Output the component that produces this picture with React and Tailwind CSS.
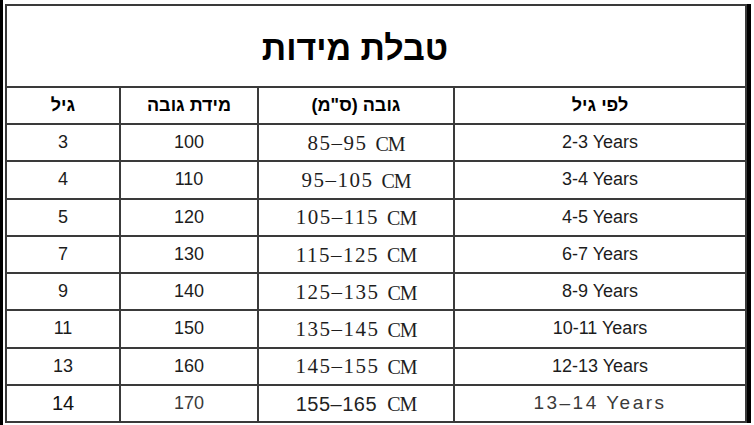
import React from 'react';

const rows = [
    { age: '3', size: '100', height: '85–95', years: '2-3 Years' },
    { age: '4', size: '110', height: '95–105', years: '3-4 Years' },
    { age: '5', size: '120', height: '105–115', years: '4-5 Years' },
    { age: '7', size: '130', height: '115–125', years: '6-7 Years' },
    { age: '9', size: '140', height: '125–135', years: '8-9 Years' },
    { age: '11', size: '150', height: '135–145', years: '10-11 Years' },
    { age: '13', size: '160', height: '145–155', years: '12-13 Years' },
];

const Row = ({ children }) => (
    <div className="flex h-[37.25px] border-t-2 border-[#3a3a3a]">
        {children}
    </div>
);

const App = () => {
    return (
        <div className="w-[754px] h-[425px] bg-white overflow-hidden flex font-['Liberation_Sans',Arial,sans-serif]">
            <div className="w-[3px] h-full bg-black" />
            <div className="w-[2px]" />
            <div className="flex flex-col mt-[4px] w-[742px] h-[419px] border-2 border-[#3a3a3a]">
                <div className="h-[80px] flex items-center justify-center pr-[42px] pt-[4px]">
                    <h1 dir="rtl" className="text-[34px] font-bold text-black">טבלת מידות</h1>
                </div>

                <div className="flex h-[37px] border-t-2 border-[#3a3a3a] text-[18px] font-bold text-black">
                    <div className="w-[112px] flex items-center justify-center" dir="rtl">גיל</div>
                    <div className="w-[138px] border-l-2 border-[#3a3a3a] flex items-center justify-center" dir="rtl">מידת גובה</div>
                    <div className="w-[196px] border-l-2 border-[#3a3a3a] flex items-center justify-center" dir="rtl">גובה (ס"מ)</div>
                    <div className="flex-1 border-l-2 border-[#3a3a3a] flex items-center justify-center" dir="rtl">לפי גיל</div>
                </div>

                {rows.map((r) => (
                    <Row key={r.age}>
                        <div className="w-[112px] flex items-center justify-center text-[18px] text-[#1c1c1c]">{r.age}</div>
                        <div className="w-[138px] border-l-2 border-[#3a3a3a] flex items-center justify-center text-[18px] text-[#1c1c1c]">{r.size}</div>
                        <div className="w-[196px] border-l-2 border-[#3a3a3a] flex items-center justify-center font-['Liberation_Serif',serif] text-[21px] text-[#1e1e1e] pt-[2px]">
                            <span className="tracking-[1.5px]">{r.height}</span>
                            <span className="ml-[8px] text-[20px] tracking-[-1px]">CM</span>
                        </div>
                        <div className="flex-1 border-l-2 border-[#3a3a3a] flex items-center justify-center text-[18px] text-[#1c1c1c]">{r.years}</div>
                    </Row>
                ))}

                <div className="flex flex-1 border-t-2 border-[#3a3a3a]">
                    <div className="w-[112px] flex items-center justify-center text-[20px] text-[#111]">14</div>
                    <div className="w-[138px] border-l-2 border-[#3a3a3a] flex items-center justify-center text-[18px] text-[#3a3a3a]">170</div>
                    <div className="w-[196px] border-l-2 border-[#3a3a3a] flex items-center justify-center text-[20px] text-[#222] pt-[2px]">
                        <span className="tracking-[0.5px]">155–165</span>
                        <span className="ml-[10px] font-['Liberation_Serif',serif] text-[20px] tracking-[-1px]">CM</span>
                    </div>
                    <div className="flex-1 border-l-2 border-[#3a3a3a] flex items-center justify-center text-[19px] text-[#3a3a3a] tracking-[2.5px]">13–14 Years</div>
                </div>
            </div>
            <div className="w-[4px] h-[419px] mt-[4px] bg-black" />
        </div>
    );
};

export default App;
